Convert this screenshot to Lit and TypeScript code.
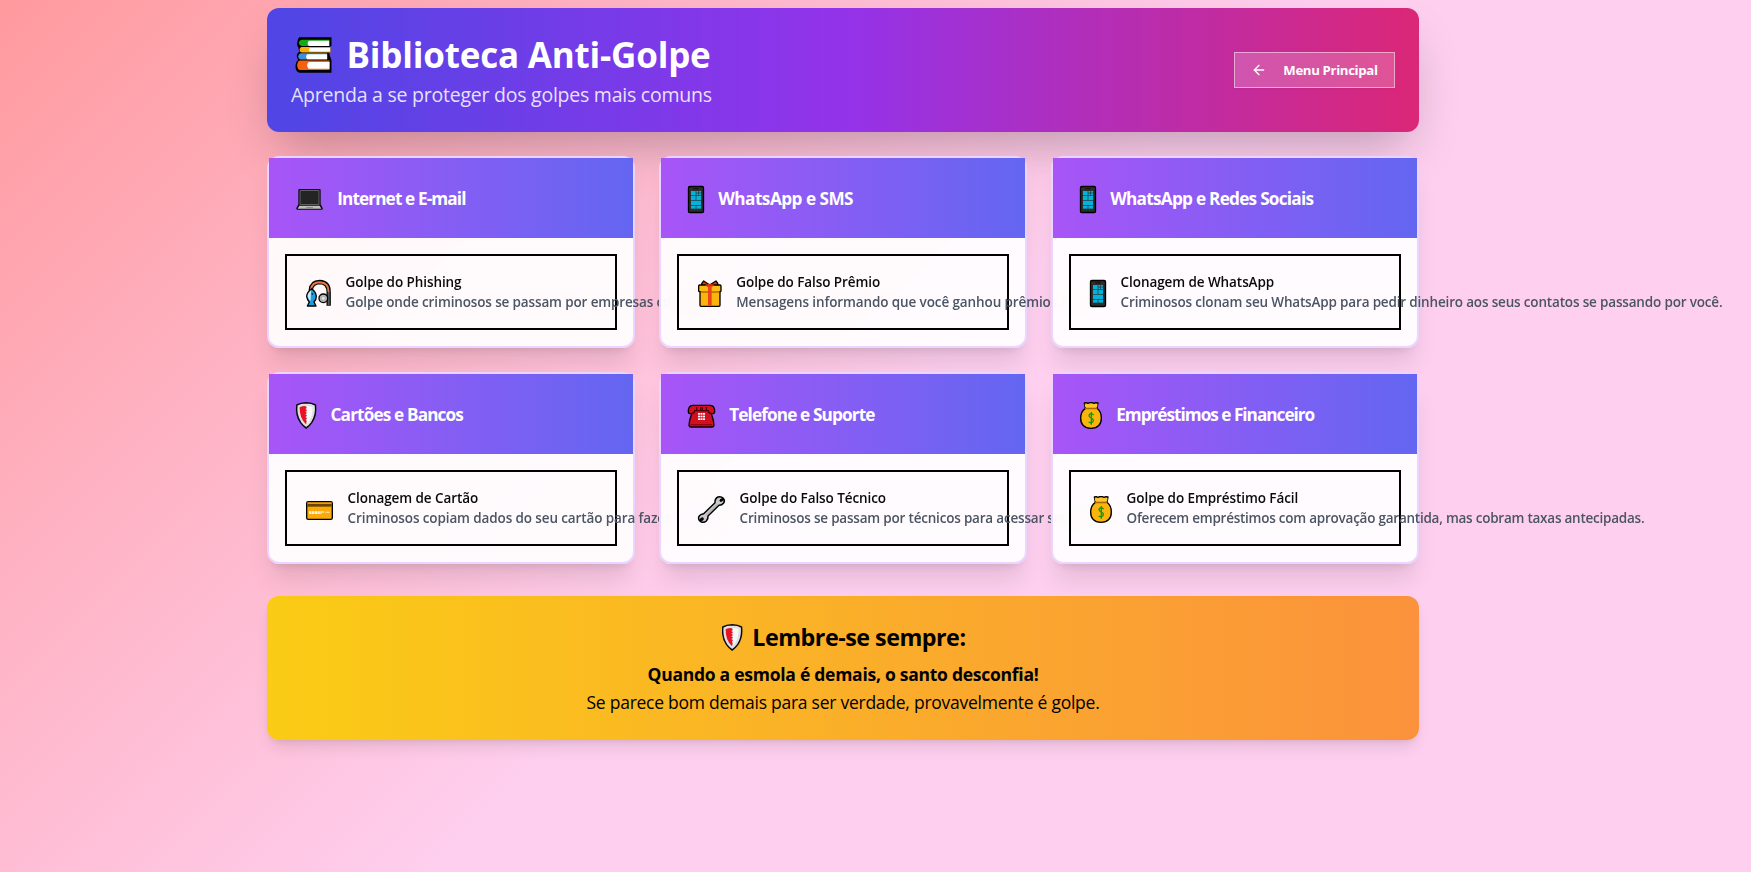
import { LitElement, html, css, svg } from "lit";
import { customElement, property } from "lit/decorators.js";
import { styleMap } from "lit/directives/style-map.js";

const phone = svg`
  <rect x="1.5" y="1.5" width="45" height="78" rx="4" fill="#2d2d2d" stroke="#000" stroke-width="4"/>
  <rect x="16" y="7" width="16" height="3" fill="#111"/>
  <g fill="#00b2dc">
    <rect x="9" y="15" width="14" height="12"/><rect x="25" y="15" width="5" height="5"/><rect x="32" y="15" width="7" height="5"/>
    <rect x="25" y="22" width="5" height="5"/><rect x="32" y="22" width="7" height="5"/>
    <rect x="9" y="29" width="14" height="13"/><rect x="25" y="29" width="14" height="13"/>
    <rect x="9" y="44" width="30" height="13"/>
    <rect x="9" y="59" width="14" height="9"/><rect x="25" y="59" width="14" height="9"/>
  </g>`;

const bag = svg`
  <path d="M13 3 L19 2 L24 4 L29 2 L37 2 L42 4 L47 2 L54 3 L51 19 Q64 29 64 48 Q64 78 33 79 Q2 78 2 48 Q2 29 16 19 Z" fill="#fbb40c" stroke="#000" stroke-width="4" stroke-linejoin="round"/>
  <path d="M16 17 H51 L52 22 H14 Z" fill="#a86a05"/>
  <path d="M14 7 L53 7 L51 16 L16 16 Z" fill="#ffc62e"/>
  <path d="M41 39 Q33 32 28 38 Q25 44 34 48 Q43 53 39 59 Q34 65 26 60 M34 30 V68" fill="none" stroke="#0c9a0c" stroke-width="4"/>`;

const shield = svg`
  <path d="M30.500 2.500 Q48 3 58.500 9 Q62 40 47 62 Q39 73 30.500 78 Q22 73 14 62 Q-1 40 2.500 9 Q13 3 30.500 2.500 Z" fill="#e0e0e0" stroke="#0a0a12" stroke-width="4.500" stroke-linejoin="round"/>
  <path d="M31 12 L28 14 L33 17 L28 21 L33 25 L28 29 L33 33 L28 37 L33 41 L28 45 L33 49 L29 53 L32 57 L30 67 Q10 48 11 16 Q20 11 31 12 Z" fill="#e81224"/>
  <path d="M33 12 Q43 12 50 16 Q50 40 40 56 Q36 63 33 65 Z" fill="#f8f8f8"/>`;

const laptop = svg`
  <path d="M10 9 H71 Q74 9 74 12 V55 L80 66 Q82 71 77 71.500 H5 Q-1 71 1 66 L7 55 V12 Q7 9 10 9 Z" fill="#0a0a0a"/>
  <rect x="11" y="13" width="59" height="43" fill="#8a8a8a"/>
  <rect x="13" y="15" width="55" height="39" fill="#242424"/>
  <path d="M10 59 H71 L76 68 H5 Z" fill="#bdbdbd"/>
  <rect x="31" y="63" width="20" height="3" fill="#8b8b8b"/>`;

const telephone = svg`
  <path d="M14 10 H67 Q80 11 80 28 Q80 35 75 35 L70 35 Q77 53 78 70 Q77 75 72 75 H9 Q4 75 3 70 Q4 53 11 35 L6 35 Q1 35 1 28 Q1 11 14 10 Z" fill="#d10f20" stroke="#0a0000" stroke-width="4" stroke-linejoin="round"/>
  <path d="M10 34 Q20 34 20 26 H61 Q61 34 71 34" fill="none" stroke="#4a0008" stroke-width="4"/>
  <path d="M26 15 V25 M38 15 V25 M43 15 V25 M55 15 V25" stroke="#4a0008" stroke-width="3.500"/>
  <g fill="#fff"><rect x="30" y="33" width="6" height="5"/><rect x="37.500" y="33" width="6" height="5"/><rect x="45" y="33" width="6" height="5"/>
  <rect x="30" y="41" width="6" height="5"/><rect x="37.500" y="41" width="6" height="5"/><rect x="45" y="41" width="6" height="5"/>
  <rect x="30" y="49" width="6" height="5"/><rect x="37.500" y="49" width="6" height="5"/><rect x="45" y="49" width="6" height="5"/></g>
  <path d="M8 68 H73" stroke="#93000f" stroke-width="4"/>`;

const fishing = svg`
  <path d="M14 32 Q16 6 41 6 Q68 7 68 36 V77" fill="none" stroke="#000" stroke-width="13" stroke-linejoin="round"/>
  <path d="M14 30 Q18 7 41 7 Q68 8 68 36" fill="none" stroke="#e27a4b" stroke-width="6"/>
  <path d="M68 36 V76" stroke="#5c5c5c" stroke-width="6"/>
  <circle cx="52" cy="55" r="13" fill="#b5b5b5" stroke="#000" stroke-width="4"/>
  <circle cx="52" cy="55" r="4" fill="#e8e8e8"/>
  <path d="M17 26 Q2 37 2 49 Q4 61 10 66 L4 78 H30 L24 66 Q31 60 31 49 Q30 36 17 26 Z" fill="#1b9de2" stroke="#000" stroke-width="4" stroke-linejoin="round"/>
  <path d="M15 31 Q4 41 5 50 Q9 61 14 62 Z" fill="#c8ecff"/>
  <circle cx="19" cy="42" r="2.500"/>`;

const gift = svg`
  <path d="M35 15 L17 3 Q11 8 10 17 H60 Q60 8 54 3 Z" fill="#dd3c10" stroke="#000" stroke-width="4" stroke-linejoin="round"/>
  <rect x="6" y="34" width="60" height="45" rx="3" fill="#fcb40d" stroke="#000" stroke-width="4"/>
  <rect x="2" y="15" width="67" height="20" rx="3" fill="#ffba12" stroke="#000" stroke-width="4"/>
  <rect x="8" y="33" width="56" height="5" fill="#c47b00"/>
  <path d="M20 15 Q35 8 50 15 L42 20 H28 Z" fill="#c9320c"/>
  <rect x="30" y="17" width="11" height="60" fill="#ea4518"/>`;

const wrench = svg`
  <path d="M60 3 Q69 0 75 6 Q82 13 77 21 Q72 28 63 28 L30 60 Q31 69 25 75 Q18 81 10 78 Q0 73 2 63 Q6 54 17 53 L51 20 Q50 8 60 3 Z" fill="#c9c9c9" stroke="#000" stroke-width="4.500" stroke-linejoin="round"/>
  <path d="M75 5 L67 9 L64 14 L68 18 L73 16 L79 10 Z M5 76 L14 74 L18 69 L15 64 L9 65 L3 72 Z" fill="#000"/>
  <path d="M25 58 L58 25" stroke="#b0b0b0" stroke-width="4"/>`;

const creditCard = svg`
  <rect x="2" y="17" width="77" height="53" rx="5" fill="#fbaa0a" stroke="#000" stroke-width="4"/>
  <rect x="4" y="24" width="73" height="8" fill="#6e4300"/>
  <path d="M4 20.500 H77" stroke="#c98300" stroke-width="3"/>
  <path d="M9 48 H54 M9 52 H46" stroke="#fff3d6" stroke-width="4" stroke-dasharray="7 1.500"/>
  <path d="M58 49 H72" stroke="#ffd98a" stroke-width="4"/>`;

type Glyph = { art: unknown; w: number };
const G: Record<string, Glyph> = {
  phone: { art: phone, w: 48 },
  bag: { art: bag, w: 66 },
  shield: { art: shield, w: 61 },
  laptop: { art: laptop, w: 81 },
  telephone: { art: telephone, w: 81 },
  fishing: { art: fishing, w: 75 },
  gift: { art: gift, w: 71 },
  wrench: { art: wrench, w: 81 },
  card: { art: creditCard, w: 81 },
};

const glyph = (name: string) => html`<svg class="glyph" width=${G[name].w / 3} height="27" viewBox="0 0 ${G[name].w} 81">${G[name].art}</svg>`;

interface Topic { icon: string; title: string; track: number; itemIcon: string; item: string; text: string; textTrack: number; }

const topics: Topic[] = [
  { icon: "laptop", title: "Internet e E-mail", track: -0.88, itemIcon: "fishing", item: "Golpe do Phishing", text: "Golpe onde criminosos se passam por empresas confiáveis.", textTrack: -0.14 },
  { icon: "phone", title: "WhatsApp e SMS", track: -0.52, itemIcon: "gift", item: "Golpe do Falso Prêmio", text: "Mensagens informando que você ganhou prêmios falsos.", textTrack: -0.11 },
  { icon: "phone", title: "WhatsApp e Redes Sociais", track: -0.74, itemIcon: "phone", item: "Clonagem de WhatsApp", text: "Criminosos clonam seu WhatsApp para pedir dinheiro aos seus contatos se passando por você.", textTrack: -0.17 },
  { icon: "shield", title: "Cartões e Bancos", track: -0.86, itemIcon: "card", item: "Clonagem de Cartão", text: "Criminosos copiam dados do seu cartão para fazer compras.", textTrack: -0.12 },
  { icon: "telephone", title: "Telefone e Suporte", track: -0.87, itemIcon: "wrench", item: "Golpe do Falso Técnico", text: "Criminosos se passam por técnicos para acessar seus dados.", textTrack: -0.2 },
  { icon: "bag", title: "Empréstimos e Financeiro", track: -1, itemIcon: "bag", item: "Golpe do Empréstimo Fácil", text: "Oferecem empréstimos com aprovação garantida, mas cobram taxas antecipadas.", textTrack: -0.24 },
];

@customElement("topic-card")
class TopicCard extends LitElement {
  @property({ attribute: false }) topic!: Topic;
  static styles = css`
    :host { display: block; box-sizing: border-box; min-width: 0; border: 2px solid #e9d5ff; border-radius: 12px;
      background: rgba(255,255,255,.92); backdrop-filter: blur(16px);
      box-shadow: 0 20px 25px -5px rgba(0,0,0,.1), 0 8px 10px -6px rgba(0,0,0,.1); }
    .glyph { display: block; flex: none; margin-top: 3px; overflow: visible; }
    .head { height: 80px; box-sizing: border-box; padding: 0 27px; display: flex; align-items: center; gap: 14.200px;
      color: #fff; background: linear-gradient(to right, #a855f7, #6366f1); }
    .title { margin: 0; padding-top: 2px; font-size: 17.200px; line-height: 28px; font-weight: 700; white-space: nowrap; }
    .body { padding: 16px; }
    .item { height: 76px; box-sizing: border-box; border: 2px solid #000; padding: 0 19px; display: flex; align-items: center; gap: 14.600px;
      font-size: 13.500px; line-height: 20px; font-weight: 600; letter-spacing: -.08px; white-space: nowrap; color: #0a0a0a; }
    .copy { min-width: 0; }
    .text { color: #4b5563; }
  `;
  render() {
    const t = this.topic;
    return html`
      <div class="head">${glyph(t.icon)}<h2 class="title" style=${styleMap({ letterSpacing: `${t.track}px` })}>${t.title}</h2></div>
      <div class="body"><div class="item">${glyph(t.itemIcon)}<div class="copy"><div>${t.item}</div><div class="text" style=${styleMap({ letterSpacing: `${t.textTrack}px` })}>${t.text}</div></div></div></div>`;
  }
}

@customElement("app-root")
class AppRoot extends LitElement {
  static styles = css`
    :host { display: block; box-sizing: border-box; min-height: 872px; padding: 8px 0 0 267px; overflow: hidden;
      font-family: "Open Sans", "Noto Sans", sans-serif; background: linear-gradient(135deg, #ff9a9e 0%, #fecfef 50%, #fecfef 100%); }
    .page { width: 1152px; }
    .hero { height: 124px; box-sizing: border-box; padding: 24px; display: flex; justify-content: space-between; align-items: center;
      border-radius: 12px; color: #fff; background: linear-gradient(to right, #4f46e5, #9333ea, #db2777);
      box-shadow: 0 25px 50px -12px rgba(0,0,0,.25); }
    .hero h1 { margin: 0 0 8px; height: 40px; display: flex; align-items: center; gap: 14.500px; padding-left: 4px;
      font-size: 35px; line-height: 40px; font-weight: 700; letter-spacing: -.2px; white-space: nowrap; }
    .books { display: block; margin-top: 6px; }
    .name { padding-top: 5px; }
    .sub { margin: 0; padding-top: 1px; height: 27px; font-size: 19.500px; line-height: 28px; letter-spacing: -.24px; color: rgba(255,255,255,.86); }
    .menu { box-sizing: border-box; width: 161px; height: 36px; padding: 0 0 0 15.800px; display: flex; align-items: center; gap: 16.500px;
      border: 1px solid rgba(255,255,255,.5); border-radius: 0; background: rgba(255,255,255,.2); color: #fff; font: 700 13.200px/20px "Open Sans", sans-serif;
      letter-spacing: -.34px; white-space: nowrap; box-shadow: 0 1px 2px rgba(0,0,0,.05); }
    .grid { display: grid; grid-template-columns: repeat(3, minmax(0, 1fr)); gap: 24px; margin: 24px 0 32px; }
    .tip { height: 144px; box-sizing: border-box; padding: 24px; border-radius: 12px; text-align: center; color: #000;
      background: linear-gradient(to right, #facc15, #fb923c); box-shadow: 0 10px 15px -3px rgba(0,0,0,.1), 0 4px 6px -4px rgba(0,0,0,.1); }
    .tip h3 { margin: 0 0 8px; height: 32px; display: flex; justify-content: center; align-items: center; gap: 9.500px;
      font-size: 23.300px; line-height: 32px; font-weight: 700; letter-spacing: -.5px; padding: 1px 0 0 2px; box-sizing: border-box; }
    .tip h3 span { padding-top: 1px; }
    .tip .glyph { display: block; margin-top: 2px; }
    .tip p { margin: 0; font-size: 17.500px; line-height: 28px; letter-spacing: -.255px; }
    .tip .strong { font-weight: 700; letter-spacing: -.26px; }
  `;
  render() {
    return html`<div class="page">
      <header class="hero">
        <div>
          <h1>
            <svg class="books" width="37" height="36" viewBox="33 38 109 107">
              <path d="M45 39 H141 V65 H137 L138 68 V82 L134 87 L141 107 V144 H46 Q34 142 34 125 Q35 110 42 106 Q36 98 38 91 Q40 84 47 82 Q42 78 43 70 Q38 66 39 55 Q40 43 45 39 Z" fill="#000"/>
              <path d="M52 46 H135 V65 H52 Q44 62 44 55 Q45 47 52 46 Z" fill="#16a916"/><path d="M74 49 H134 V65 H74 Q66 57 74 49 Z" fill="#fff"/>
              <path d="M52 68 H138 V84 H52 Q46 82 46 76 Q47 69 52 68 Z" fill="#fbae0b"/><path d="M76 71 H137 V81 H76 Q71 76 76 71 Z" fill="#fff"/>
              <path d="M49 86 H128 V105 H49 Q42 103 42 96 Q43 87 49 86 Z" fill="#3f8fdc"/><path d="M69 89 H128 V104 H69 Q62 96 69 89 Z" fill="#fff"/>
              <path d="M47 108 H135 V136 H47 Q39 134 39 122 Q40 109 47 108 Z" fill="#f4600f"/><path d="M73 112 H135 V132 H73 Q64 122 73 112 Z" fill="#fff"/>
            </svg>
            <span class="name">Biblioteca Anti-Golpe</span>
          </h1>
          <p class="sub">Aprenda a se proteger dos golpes mais comuns</p>
        </div>
        <button class="menu">
          <svg width="16" height="16" viewBox="0 0 24 24" fill="none" stroke="#fff" stroke-width="2" stroke-linecap="round" stroke-linejoin="round"><path d="m12 19-7-7 7-7"/><path d="M19 12H5"/></svg>
          Menu Principal
        </button>
      </header>
      <main class="grid">${topics.map((t) => html`<topic-card .topic=${t}></topic-card>`)}</main>
      <section class="tip">
        <h3>${glyph("shield")}<span>Lembre-se sempre:</span></h3>
        <p class="strong">Quando a esmola é demais, o santo desconfia!</p>
        <p>Se parece bom demais para ser verdade, provavelmente é golpe.</p>
      </section>
    </div>`;
  }
}
